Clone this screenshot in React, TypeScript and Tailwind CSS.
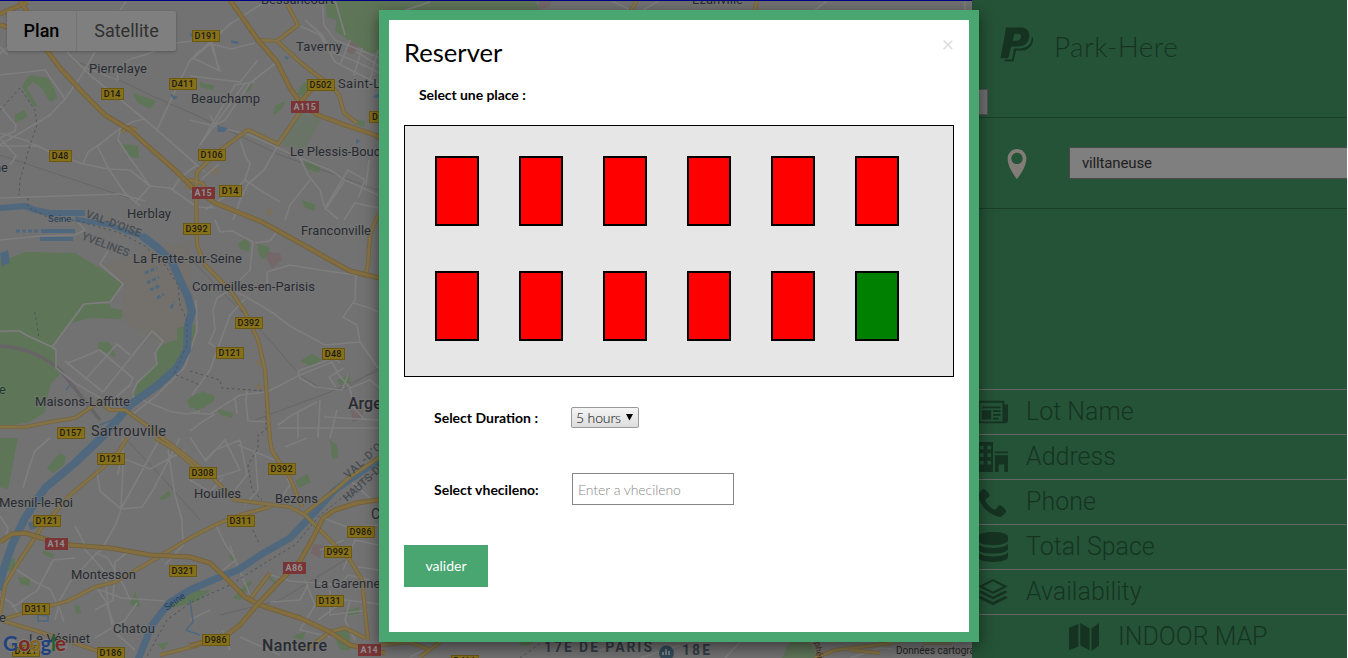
import { ImNewspaper, ImOffice, ImPhone, ImDatabase, ImStack, ImMap, ImLocation } from "react-icons/im";

const greens = [
  "22,86 30,75 48,78 55,90 57,98 50,102 42,88 33,82 27,88 38,107 32,105",
  "15,115 25,110 27,117 15,123", "133,93 156,101 150,109 137,102", "122,144 138,146 139,158 128,157",
  "0,258 10,258 25,252 75,253 100,268 123,284 110,302 84,304 52,347 20,331 0,332",
  "71,323 85,304 110,304 111,308 122,310 122,319 90,318",
  "0,333 20,331 38,337 55,350 56,367 60,374 50,385 45,412 30,422 0,427",
  "98,342 109,342 116,355 114,357 98,349",
  "177,328 195,324 195,335 180,365 168,380 140,402 133,400 137,385 157,362 157,350 165,343 177,340",
  "187,400 198,393 205,408 190,408", "325,0 342,0 390,0 390,48 370,54 358,46 347,39 335,31 337,20 327,17",
  "200,82 215,86 212,90 200,87", "245,92 253,82 250,91", "300,87 305,82 310,84 306,96 297,95",
  "273,115 275,106 285,101 283,107 278,112", "303,159 321,165 319,173 307,169", "302,200 316,205 314,211 304,207",
  "355,120 365,121 364,127 356,125", "238,244 246,238 250,243 249,252 240,249", "257,243 270,248 269,253 263,260 259,255",
  "300,361 312,354 322,360 311,366", "190,402 202,391 215,396 214,401 197,411",
  "218,409 233,413 232,418 219,414", "337,380 350,374 350,383 340,385",
  "0,438 18,438 8,489 0,487", "47,468 60,453 66,456 64,465 53,473", "159,498 169,491 171,496 162,500",
  "5,560 15,558 15,570 6,572", "18,577 30,578 30,586 20,584", "43,550 55,555 52,558 43,554",
  "74,606 79,605 81,613 77,614", "130,604 135,592 140,606 134,607",
  "168,608 182,590 200,588 200,600 180,606", "157,644 169,642 163,650",
  "295,481 307,474 311,482 299,488", "330,440 337,445 338,458 332,459",
  "228,556 233,553 237,561 234,563", "233,598 250,580 252,583 240,600", "265,575 278,582 277,586",
  "190,592 212,590 202,597 190,602", "332,630 349,629 351,650 340,650", "291,637 306,631 303,640",
  "344,611 360,607 358,614 346,615", "380,0 535,0 540,10 380,10", "790,641 810,641 818,658 782,658",
  "520,642 533,642 530,645 520,646"
];

const roads = [
  "M0 54L10 45M120 10L127 0H140M0 75L45 70L65 99L81 76L95 52M65 99L50 115L20 133L0 145M67 52L90 75L143 118L157 130L197 165L205 172",
  "M157 130L170 102L190 60L200 50M0 47L8 55M200 40L175 43L145 55L130 59L117 71L118 80L84 67",
  "M145 119L132 122L118 130L100 144L88 152L83 164M0 133L25 140L50 152L83 164L108 169L130 170L150 186L170 188L197 207L215 208M97 145L108 168L125 193L140 206M120 130L118 140L130 158L150 186M0 198L60 196L120 194L145 201M172 190L180 178L197 165M150 186L135 203",
  "M0 146H40M0 138L16 156L10 165M0 106L16 125L15 131L0 138",
  "M210 42L220 71L193 58L230 24L260 5L275 3M190 61L212 42L219 71M255 43L231 49L211 44M258 60L240 82L190 76M255 82L235 85L200 145L246 82M277 62L250 83L225 120L215 125L210 115M298 25L320 35L335 62L390 90M305 20L322 35L332 52L357 62L390 78M357 52L390 73M322 0L324 25L335 40L390 62M335 0L345 35M350 40L340 65M362 48L354 75M378 50L370 80",
  "M190 120L250 135L300 158L330 170L345 180L378 195M240 140L245 155L250 164L245 180L235 190L205 210M278 145L264 170L248 184L240 200L233 220M300 158L308 175L320 190L325 208L338 219M325 208L348 170L365 180L358 198M310 180L290 205L285 220M245 180L260 190L280 202M345 180L325 210M369 160L366 186M190 193L204 177L219 164M344 220L355 203L378 208",
  "M0 240L40 236L75 235L85 230L75 219M0 331L20 331L26 335L52 347L56 350V368L75 383L102 399M52 347L84 304L110 302L123 284L100 264L108 251M68 363L100 350L115 363L133 378L130 385L110 402M85 380L117 344L130 355M103 392L152 331L163 341L155 353L157 364L137 383L132 394M65 361L103 392M132 396L172 412L188 414L200 411M196 300L197 330L185 367L157 395L132 415",
  "M215 220L220 232L232 231L253 242L250 270L240 280M255 243L270 241L278 230M248 298L273 313L290 326L325 345L360 342M248 298L236 292M245 299L230 315L210 370L192 395M230 290L217 298L213 310L215 330L209 343L215 347M267 291L267 272L290 265L320 270L356 275L355 300L343 317L357 325L360 342L378 368M353 303L367 307L378 312",
  "M190 413L210 414L240 395L267 392L300 375L332 362L339 375L350 388L370 380L380 388M340 363L334 358L298 371L300 378L315 387L342 390L348 375M344 368L329 377L336 387M247 391L246 403L248 421L270 422M235 397L237 414M190 431L205 420L215 414M320 400L318 438M317 402L292 415L278 425M278 428H380M350 388L354 408L365 420M337 410L330 438M324 417L380 420M298 412V438",
  "M23 488L30 465L35 451L50 438M97 472L100 491L121 509L160 438M121 509L142 507L153 490L180 438M123 438V468L121 509L116 524L102 549L95 555L70 582L60 600L55 620M75 526L85 545M168 450L175 495L182 520L183 545L165 565M185 450L150 469L124 459M118 475L123 440M0 516L8 528L5 540M95 553L108 558L125 588L130 600M80 544L105 572L108 605L112 625",
  "M14 568L35 582L50 589L60 610L64 622M0 595L15 606L30 595L37 591M37 591L53 560L75 558M95 585L105 600L118 635L135 650M137 603L125 620L95 638M100 590L122 598L165 601M45 605L20 616L12 605M130 550L115 562L113 600L95 610",
  "M190 437L205 460L215 450L240 440L247 475L235 490M223 478L210 492L190 480M255 450L258 490L245 505M285 447L307 438M280 460L290 485L275 507M215 523L225 544L236 560L223 570M230 545L235 560L250 595M268 574L290 581L340 585L348 575L370 580M305 580L315 605L300 630L330 637M323 518L350 528L378 525M350 480L372 500M343 570L355 540L378 545M344 540L320 550M210 610L190 620M222 630L230 650M240 637L280 655M350 600L345 620L355 640",
  "M205 462L225 440L240 470L215 478M238 445L275 460M318 620L345 600L380 604M330 590V615L368 610M358 567L380 570M308 585L300 600L270 602",
  "M400 12L430 2M610 0L635 12M640 12L660 0M815 10L828 0M410 657L440 642M600 650L625 642M640 658L680 645M725 658L740 642M850 658L880 648L925 652M965 10V0"
];

const yellowRoads = [
  "M0 14L28 2M0 25L12 28M20 0L32 20L45 48L60 68L85 95L105 115L130 130L150 148L175 170L192 187L215 203L240 213L262 222L300 243L330 260L350 271L380 278",
  "M230 0L258 40L277 62L290 88L302 105L318 115L345 125L375 135L392 145",
  "M300 103L318 81",
  "M0 542L12 534L25 533L45 539L70 545L110 548L150 555L190 557L210 563L228 580L245 597L260 605L300 618L330 632L350 645L385 653",
  "M390 498L357 503L335 510L323 518L313 538L300 561L280 581L257 605L240 625L227 635L190 646"
];

const minorYellow = [
  "M287 4L298 25L277 41L258 40M277 41L300 62L315 74L330 84L339 95L344 113L357 123M300 112L278 144L248 130L215 154L197 172L196 190L197 245L205 265L230 290L245 312L258 340L265 370L267 400L270 440L272 451L290 478L302 507",
  "M0 427L25 427L50 422L75 418L90 408L100 402L110 410L125 410L145 424L165 440L185 455L215 480L235 500L290 507L305 515L320 530L350 560L362 580L368 640",
  "M127 438L117 455L100 470L70 495L40 530L20 560L5 585L0 615M0 620L35 610L68 601L95 587L115 582L150 562L190 538L215 525L240 515L270 507M0 620L40 632L80 645L115 657M160 655L200 645",
  "M155 438L175 450L200 472M305 513L335 490L350 477L380 457M378 215L370 235L368 265L365 278M387 125L380 138M305 650L330 632L345 628L365 638",
  "M380 645L410 642L430 650M420 657L440 642M630 12L637 0M755 10L757 0M815 658L835 650L900 642M850 650L880 653",
  "M122 132L128 127L137 130M187 188L190 180L202 183L207 190M270 573L248 602"
];

const shields: [string, number, number, boolean?][] = [
  ["D191", 192, 30], ["D411", 169, 78], ["D14", 101, 88], ["D502", 307, 79], ["A115", 291, 101, true], ["D", 369, 111],
  ["D48", 49, 150], ["D106", 198, 149], ["A15", 192, 187, true], ["D14", 219, 185], ["D392", 183, 223], ["D392", 235, 317],
  ["D121", 216, 347], ["D48", 322, 348], ["D157", 57, 427], ["D121", 97, 453], ["D308", 189, 467], ["D392", 268, 463],
  ["D121", 33, 515], ["A14", 45, 538, true], ["D311", 227, 515], ["D986", 347, 526], ["D992", 324, 546], ["D321", 169, 565],
  ["A86", 283, 562, true], ["D131", 316, 595], ["D311", 22, 603], ["D986", 202, 634], ["D186", 97, 647], ["D121", 12, 645],
  ["A14", 358, 644, true], ["D411", 451, 655], ["D410", 923, 633]
];

const places: [string, number, number, number, number][] = [
  ["Pierrelaye", 89, 73, 58, 13], ["Beauchamp", 191, 103, 69, 13], ["Taverny", 296, 51, 46, 13], ["Saint-Leu", 338, 88, 57, 13],
  ["Le Plessis-Bouchard", 290, 156, 116, 13], ["Bessancourt", 261, 4, 73, 13], ["Herblay", 127, 218, 44, 13],
  ["Franconville", 301, 235, 70, 13], ["La Frette-sur-Seine", 133, 263, 109, 13], ["Cormeilles-en-Parisis", 192, 291, 123, 13],
  ["Maisons-Laffitte", 35, 406, 95, 13], ["Sartrouville", 91, 436, 75, 14.5], ["Mesnil-le-Roi", -1, 507, 74, 13],
  ["Houilles", 194, 498, 47, 13], ["Bezons", 275, 503, 43, 13], ["Montesson", 71, 579, 65, 13], ["Chatou", 113, 633, 42, 13],
  ["Le Vésinet", 29, 643, 61, 13], ["La Garenne-", 314, 588, 70, 13], ["Ezanville", 692, 4, 51, 13],
  ["C", 371, 519, 9, 14], ["ne", -6, 172, 14, 13], ["e", -1, 622, 7, 13]
];

const logo: [string, number, string][] = [
  ["G", 3, "#1f4380"], ["o", 18.5, "#7c2722"], ["o", 29.5, "#83651b"], ["g", 40.5, "#1f4380"], ["l", 51, "#226136"], ["e", 55, "#7c2722"]
];

function RoadMap() {
  return (
    <svg className="block h-[658px] w-[972px] shrink-0 bg-[#727272]" viewBox="0 0 972 658" fontFamily="Roboto, sans-serif">
      <polygon points="100,265 190,240 192,330 165,345 120,320 125,285" fill="#74716d" />
      {greens.map((g) => <polygon key={g} points={g} fill="#5f7558" />)}
      <polygon points="297,112 322,118 305,148 281,146" fill="#6a7466" />
      <g fill="#746767">
        <polygon points="348,40 359,46 352,55 346,50" /><polygon points="267,252 280,253 282,260 272,268 266,258" />
        <polygon points="351,411 363,408 362,418 353,423" /><polygon points="313,544 323,545 320,558 311,553" />
        <polygon points="539,0 552,0 549,7 539,9" />
      </g>
      <g fill="#7b6f5e">
        <polygon points="210,166 220,168 217,175 210,173" /><polygon points="256,360 264,361 262,366 256,365" />
        <polygon points="268,208 274,210 271,216 266,213" /><polygon points="255,384 264,386 262,390 255,388" />
      </g>
      <g fill="none" stroke="#666">
        <path d="M80 63L115 78L150 95L200 117L280 155L378 190M0 155L60 175L135 200M192 260L230 300L265 335L300 375L320 388L345 389L378 368M125 438L160 475L200 520" />
        <path d="M0 346Q35 348 60 370L100 420" stroke="#666466" strokeWidth="3.5" />
        <path d="M255 420L330 392L380 370M220 615L280 600L345 560" />
      </g>
      <g fill="none" stroke="#7e7e7e" strokeWidth="1.7" strokeLinejoin="round">
        {roads.map((d) => <path key={d} d={d} />)}
      </g>
      <g fill="none" stroke="#4f687e" strokeLinejoin="round">
        <path strokeWidth="6" d="M0 208L25 206L35 210L50 213L85 213" />
        <path strokeWidth="5" d="M75 219L110 225L125 231L142 236" />
        <path strokeWidth="8" d="M142 236L158 248L172 262L180 280L188 297L192 312L188 325L187 350L177 368L158 385L130 405L105 434L75 463L45 488L25 518L12 545L4 568L-2 590" />
        <path strokeWidth="7" d="M390 452L358 474L335 490L315 512L290 538L262 554L238 570L215 579L190 590L170 602L152 625L138 660" />
        <path strokeWidth="1.5" d="M190 600L193 622L186 630L200 635M100 425L120 417L118 425M70 385L66 390M38 615L48 616V621H38Z" />
        <path strokeWidth="4" d="M41 231H75M40 239H73" /><path strokeDasharray="4 2" strokeWidth="3" d="M16 231H40M145 273L157 268M147 283L159 277M150 290L161 285M157 298L164 294M171 308L174 302" />
      </g>
      <g fill="#4f687e"><path d="M0 253L8 250L10 262L2 267ZM217 126L228 128L224 132H218ZM170 94L178 97L174 100ZM189 34L194 33L192 37ZM231 40L239 42L238 44L231 43ZM375 95L380 93L379 98L373 98ZM28 523L36 520L37 528L30 530ZM356 139L361 141L356 144ZM284 56L289 57L287 60Z" /></g>
      <g fill="none" stroke="#4a5056" strokeDasharray="2.5 3" strokeWidth=".9">
        <path d="M0 110L20 88L35 110L37 125L30 145L20 180L19 195M28 198L28 207L45 216L78 221L120 233L145 246L165 265L178 285L180 305L187 320V345L174 374L200 385M190 371L220 380L222 388L265 391M266 400V430L258 435V448L248 465L252 490L262 500M248 520L260 545" />
        <path d="M390 463L365 480L320 515L295 545L265 563L230 585L190 603L167 620L146 658M35 312L39 338M520 658L542 642" />
      </g>
      <g fill="none" strokeLinejoin="round">
        {minorYellow.map((d) => <path key={d} d={d} stroke="#756541" strokeWidth="4.2" />)}
        {minorYellow.map((d) => <path key={d + "i"} d={d} stroke="#857348" strokeWidth="2.6" />)}
        {yellowRoads.map((d) => (
          <g key={d}><path d={d} stroke="#705e3a" strokeWidth="5" /><path d={d} stroke="#836e40" strokeWidth="3.6" /></g>
        ))}
      </g>
      {shields.map(([t, x, y, red], i) => {
        const w = t.length === 4 ? 27.5 : t.length === 3 ? 22.5 : 12;
        return (
          <g key={i}>
            <rect x={x + 0.5} y={y + 0.5} width={w - 0.5} height="11" fill={red ? "#7a3436" : "#86701a"} stroke={red ? "#7a3436" : "#6b5812"} />
            <text x={x + w / 2} y={y + 9.4} textAnchor="middle" fontSize="9" fontWeight={red ? 700 : 500} letterSpacing=".3" fill={red ? "#8f8f8f" : "#1d1b12"}>{t}</text>
          </g>
        );
      })}
      <g fill="#282b32" stroke="#777" strokeWidth="2" strokeOpacity=".7" paintOrder="stroke">
        {places.map(([t, x, y, w, s]) => <text key={t + x} x={x} y={y} textLength={w} fontSize={s}>{t}</text>)}
        <text x="262" y="651" textLength="65" fontSize="16" fontWeight="500">Nanterre</text>
        <text x="348" y="409" fontSize="16" fontWeight="500">Argenteuil</text>
        <text x="544" y="652" textLength="108" fontSize="14" fontWeight="700" fill="#333c44">17E DE PARIS</text>
        <text x="682" y="655" textLength="28" fontSize="14" fontWeight="700" fill="#333c44">18E</text>
        <text x="-1" y="394" fontSize="13" fill="#173e20">e</text>
      </g>
      <g fill="#484d52" fontWeight="500" fontSize="11">
        <text transform="translate(85 217) rotate(20)" textLength="58">VAL-D'OISE</text>
        <text transform="translate(81 239) rotate(21)" textLength="50">YVELINES</text>
        <text transform="translate(348 479) rotate(-42)" textLength="66">VAL-D'OISE</text>
        <text transform="translate(347 502) rotate(-42)" textLength="86">HAUTS-DE-SEINE</text>
      </g>
      <g fill="#203e62" fontSize="9.5">
        <text x="48" y="222">Seine</text><text transform="translate(167 611) rotate(-36)">Seine</text>
      </g>
      <circle cx="666.5" cy="653" r="7.5" fill="#344b5a" />
      <path d="M663 655v-3M666 655v-6M669 655v-4" stroke="#8a9195" strokeWidth="1.5" />
      <text transform="translate(814 640) rotate(80)" fontSize="9" fill="#4e3420">iphérique</text>
      <rect x="892" y="642" width="80" height="16" fill="#747474" opacity=".7" />
      <text x="896" y="654" fontSize="10" fill="#222">Données cartographiques</text>
      <g fontFamily="Lato, sans-serif" fontSize="20.5" fontWeight="700">
        <g fill="none" stroke="#858585" strokeWidth="4.5" strokeOpacity=".6">
          {logo.map(([letter, x]) => <circle key={x} cx={letter === "G" ? 11 : x + 5.5} cy="645.5" r={letter === "l" ? 1 : 4.5} />)}
        </g>
        {logo.map(([letter, x, color]) => <text key={x} x={x} y="651" fill={color}>{letter}</text>)}
      </g>
      <rect width="972" height="1" fill="#000080" />
    </svg>
  );
}

const details = [
  { icon: ImNewspaper, label: "Lot Name" },
  { icon: ImOffice, label: "Address" },
  { icon: ImPhone, label: "Phone" },
  { icon: ImDatabase, label: "Total Space" },
  { icon: ImStack, label: "Availability" }
];

function BrandMark() {
  return (
    <svg className="h-[35px] w-[34px]" viewBox="0 0 34 35">
      <path d="M4.8 32.5H12L14 21.5H21Q32.5 20.5 31.8 9Q34.2 12 32.5 16Q30 23 22 23.6H16L13.5 34.5H4.2Z" fill="#163322" />
      <path fillRule="evenodd" d="M6 .5H22.5Q30 2 29.3 9.5Q28 19 18.5 19.6H11.3L8.3 31.3H.5ZM14.5 6.8L12.8 13.8H16.8Q21.3 13 21.2 9Q20.7 6.8 18.3 6.8Z" fill="#163322" />
    </svg>
  );
}

function Sidebar() {
  return (
    <aside className="flex h-[658px] w-[375px] shrink-0 flex-col overflow-hidden bg-[#255337] text-[#163322]">
      <header className="flex h-[118px] shrink-0 flex-col border-b border-[#1b3e29]">
        <div className="flex h-[89px] items-center pl-7">
          <BrandMark />
          <span className="ml-5 pt-0.5 font-['Lato'] text-[28px] font-light tracking-[0.35px]">Park-Here</span>
        </div>
        <div className="h-[26px] w-4 border border-[#515151] bg-[#707070]" />
      </header>
      <div className="flex h-[91px] shrink-0 items-center border-b border-[#1b3e29] pl-[30px]">
        <ImLocation className="mt-0.5 size-[30px] shrink-0 text-[#827c76]" />
        <div className="ml-[37px] flex h-8 w-[300px] shrink-0 items-center border border-[#494949] bg-[#7f7f7f] pl-3 font-['Roboto'] text-[15px] tracking-[-0.15px] text-[#202020]">villtaneuse</div>
      </div>
      <div className="h-[180px] shrink-0" />
      {details.map(({ icon: Icon, label }) => (
        <div key={label} className="flex h-[45px] shrink-0 items-center border-t border-[#666] pl-[6px]">
          <Icon className="size-[30px]" />
          <span className="ml-[18px] font-['Roboto'] text-[25px] font-light">{label}</span>
        </div>
      ))}
      <div className="flex h-[45px] shrink-0 items-center border-t border-[#666] pl-[97px]">
        <ImMap className="size-[30px]" />
        <span className="ml-[19px] font-['Roboto'] text-[25px] font-light">INDOOR MAP</span>
      </div>
    </aside>
  );
}

function ReservationDialog() {
  return (
    <div className="absolute top-[10px] left-[379px] flex h-[632px] w-[600px] flex-col border-10 border-[#49a671] bg-white px-[15px] font-['Lato'] text-sm text-black shadow-[0_5px_15px_rgba(0,0,0,0.5)]">
      <div className="flex h-[60px] justify-between pt-[14px]">
        <h1 className="text-[25.6px] leading-9">Reserver</h1>
        <button className="h-5 text-[21px] leading-[18px] font-normal text-[#ddd]">×</button>
      </div>
      <div className="h-[45px] pt-[5px] pl-[15px] leading-5 font-bold tracking-[-0.06px]">Select une place :</div>
      <div className="grid h-[252px] shrink-0 grid-cols-[repeat(6,44px)] grid-rows-[70px_70px] gap-x-10 gap-y-[45px] border border-black bg-[#e6e6e6] pt-[30px] pl-[30px]">
        {Array.from({ length: 12 }, (_, i) => (
          <div key={i} className={i === 11 ? "border-2 border-black bg-[#008000]" : "border-2 border-black bg-[#ff0000]"} />
        ))}
      </div>
      <div className="mt-[30px] flex h-[21px] items-center pl-[30px]">
        <label className="w-[137px] font-bold">Select Duration :</label>
        <div className="flex h-[21px] w-[68px] items-center justify-between rounded-[2px] border border-[#999] bg-linear-to-b from-[#f5f5f5] to-[#ddd] pr-[5px] pl-1 font-light text-black">
          <span className="tracking-[-0.15px]">5 hours</span>
          <svg className="mb-px h-[7px] w-[7px]" viewBox="0 0 7 7"><path d="M0 0h7L3.5 6.5z" fill="#000" /></svg>
        </div>
      </div>
      <div className="mt-[45px] flex h-8 items-center pl-[30px]">
        <label className="w-[138px] pt-0.5 font-bold">Select vhecileno:</label>
        <input className="h-8 w-[162px] border border-[#858585] px-[5px] font-light tracking-[-0.06px] placeholder:text-[#888]" placeholder="Enter a vhecileno" />
      </div>
      <button className="mt-10 h-[42px] w-[84px] bg-[#49a671] text-white">valider</button>
    </div>
  );
}

export default function App() {
  return (
    <main className="relative flex h-[658px] w-[1348px] overflow-hidden bg-white">
      <RoadMap />
      <Sidebar />
      <div className="absolute top-[11px] left-[7px] flex h-10 w-[169px] rounded-[2px] bg-[#7f7f7f] font-['Roboto'] text-lg shadow-[0_1px_3px_rgba(0,0,0,0.25)]">
        <div className="flex w-[70px] items-center justify-center border-r border-[#747474] font-medium text-black">Plan</div>
        <div className="flex flex-1 items-center justify-center text-[#303030]">Satellite</div>
      </div>
      <ReservationDialog />
    </main>
  );
}
